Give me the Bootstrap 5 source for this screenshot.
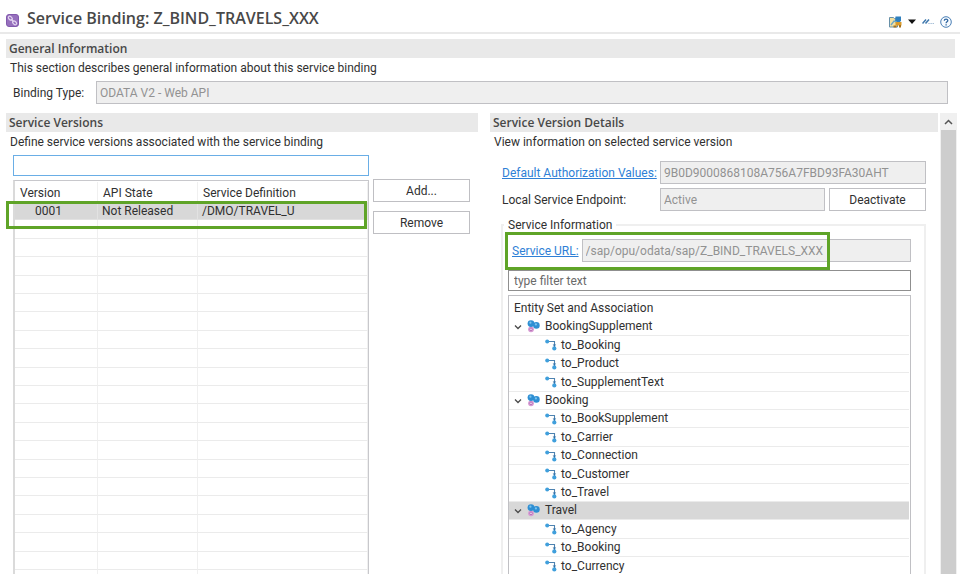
<!DOCTYPE html>
<html lang="en">
<head>
<meta charset="utf-8">
<meta name="viewport" content="width=device-width, initial-scale=1">
<title>Service Binding: Z_BIND_TRAVELS_XXX</title>
<link href="https://cdn.jsdelivr.net/npm/bootstrap@5.3.0/dist/css/bootstrap.min.css" rel="stylesheet">
<style>
  body { font-family: Roboto, "Open Sans", sans-serif; font-size: 12px; line-height: 18px; color: #303030; background: #fff; }
  .editor-head { height: 34px; border-bottom: 2px solid #e9e9e9; padding: 0 8px 0 6px; }
  .editor-title { font-family: "Open Sans", sans-serif; font-size: 16px; line-height: 20px; font-weight: 600; color: #484848; padding-top: 3px; padding-left: 8px; }
  .tools { gap: 6px; padding-top: 11px; }
  .tool { border: 0; padding: 0; background: none; display: flex; }
  .section-title { font-family: "Open Sans", sans-serif; font-size: 12px; line-height: 19px; font-weight: 600; color: #484848; background: #e9e9e9; padding-left: 3px; margin: 0; }
  .section-note { margin: 0; padding: 1px 0 0 4px; }
  .field { height: 23px; font-size: 12px; line-height: 18px; padding: 0 3px; border: 1px solid #c0c0c4; border-radius: 0; color: #303030; background: #fff; min-width: 0; }
  .field:read-only { background: #efefef; color: #929292; }
  .field:focus { box-shadow: none; }
  .push { height: 23px; font-size: 12px; line-height: 18px; padding: 0; border: 1px solid #bfbfc3; border-radius: 0; background: #fff; color: #303030; flex: none; width: 97px; }
  .caption-link { color: #2f7fd6; text-decoration: underline; flex: none; }
  .general { padding: 5px 5px 0 6px; }
  .general-row { padding: 4px 7px 0 7px; }
  .general-row label { width: 83px; flex: none; }
  .workspace { padding: 9px 0 0 6px; }
  .panels { display: grid; grid-template-columns: 472fr 448fr; gap: 12px; margin-right: 2px; }
  .panel { display: flex; flex-direction: column; min-height: 0; }
  .versions-body { padding: 4px 8px 0 7px; gap: 4px; }
  .versions-list { display: flex; flex-direction: column; gap: 4px; }
  .search-box { height: 21px; border-color: #6aaee6; }
  .side-buttons { gap: 9px; padding-top: 24px; }
  .grid-wrap { position: relative; border: 1px solid #c8c8cc; border-left: 2px solid #dadada; border-bottom: 0; padding-top: 1px; }
  .versions { width: 100%; table-layout: fixed; border-collapse: separate; border-spacing: 0; }
  .versions th { font-weight: 400; height: 20px; line-height: 18px; padding: 2px 0 0 5px; border-right: 1px solid #f0f0f0; }
  .versions td { height: 18px; line-height: 16px; padding: 1px 0 0 4px; border-right: 1px solid #f0f0f0; border-bottom: 1px solid #ebebeb; }
  .versions tbody tr:nth-child(5n+2) td, .versions tbody tr:nth-child(5n+4) td { height: 19px; }
  .versions .picked td { background: #d8d8d8; border-color: #e2e2e2; }
  .versions td:first-child { padding-left: 20px; }
  .col-version { width: 83px; }
  .col-state { width: 100px; }
  .highlight { position: absolute; border: 3px solid #5fa428; pointer-events: none; }
  .highlight-row { left: -9px; right: 1px; top: 20px; height: 28px; }
  .highlight-url { left: -3px; right: 81px; top: -7px; bottom: -8px; }
  .details-body { padding: 10px 12px 0 11px; gap: 4px; }
  .details-row { gap: 4px; }
  .details-row > :first-child { width: 155px; flex: none; white-space: nowrap; padding-left: 1px; }
  .info-box { border: 2px solid #efefef; border-bottom: 0; padding: 0 13px 0 5px; margin-top: 1px; display: flex; flex-direction: column; min-width: 0; }
  .info-box legend { float: none; width: auto; font-size: 12px; line-height: 18px; padding: 0 4px; margin: 0 0 0 -4px; }
  .url-row { position: relative; padding-left: 4px; gap: 3px; margin: 5px 0 8px; }
  .filter-box { height: 21px; border-color: #8f8f8f; padding-left: 5px; margin-bottom: 4px; color: #666; }
  .filter-box::placeholder { color: #6a6a6a; opacity: 1; }
  .tree { border: 1px solid #c0c0c4; border-bottom: 0; padding: 3px 1px 0 0; }
  .tree-head { padding-left: 5px; height: 19px; line-height: 18px; }
  .tree ul { list-style: none; margin: 0; padding: 0; }
  .tree-row { display: flex; align-items: center; height: 18px; line-height: 17px; border-bottom: 1px solid #ebebeb; padding-left: 5px; gap: 5px; }
  .tree-row:nth-child(5n+2), .tree-row:nth-child(5n+4) { height: 19px; }
  .tree-leaf { padding-left: 36px; gap: 4px; }
  .tree-row.picked { background: #d8d8d8; }
  .tree-row svg { flex: none; }
  .scroll-rail { width: 17px; flex: none; background: #cdcdcd; border: 1px solid #f0f0f0; border-width: 0 1px; margin-right: 3px; }
  .scroll-up { height: 17px; border: 0; background: #f0f0f0; padding: 0; display: flex; width: 100%; }
</style>
<script src="https://cdn.jsdelivr.net/npm/bootstrap@5.3.0/dist/js/bootstrap.bundle.min.js"></script>
</head>
<body class="vh-100 overflow-hidden d-flex flex-column">
<svg width="0" height="0" class="position-absolute" aria-hidden="true">
  <defs>
    <symbol id="i-entity" viewBox="0 0 13 13">
      <circle cx="4" cy="9.3" r="2.9" fill="#d79bd3"/><circle cx="4" cy="9.3" r="1.3" fill="#f3dcf1" stroke="#a65aa8" stroke-width=".7"/>
      <circle cx="4" cy="3.6" r="3.4" fill="#2e8fd3"/><circle cx="9.4" cy="5.4" r="3.3" fill="#2e8fd3"/>
      <circle cx="3.4" cy="2.7" r="1.1" fill="#7cc4ef"/><circle cx="8.9" cy="4.4" r="1.1" fill="#7cc4ef"/>
    </symbol>
    <symbol id="i-assoc" viewBox="0 0 12 12">
      <path d="M2 2.5H9.5V9" fill="none" stroke="#4d82b0" stroke-width="1.1"/>
      <circle cx="2.2" cy="2.5" r="2" fill="#3f9fdc"/><circle cx="9.3" cy="9.4" r="2.1" fill="#3f9fdc"/>
      <path d="M7.6 5.4h3.6L9.4 7.6z" fill="#2f6ea5"/>
    </symbol>
    <symbol id="i-open" viewBox="0 0 8 8"><path d="M1 2.5l3 3 3-3" fill="none" stroke="#4a4a4a" stroke-width="1.3"/></symbol>
  </defs>
</svg>

<header class="editor-head d-flex align-items-center flex-shrink-0">
  <svg width="13" height="13" viewBox="0 0 13 13" class="mt-2" aria-hidden="true">
    <rect x=".5" y=".5" width="12" height="12" rx="2.5" fill="#9670bd" stroke="#8259ad"/>
    <g fill="none" stroke="#e3d4f0" stroke-width="1.2"><ellipse cx="4.300" cy="4.200" rx="2.300" ry="1.500" transform="rotate(45 4.300 4.200)"/><ellipse cx="8.600" cy="8.800" rx="2.300" ry="1.500" transform="rotate(45 8.600 8.800)"/><path d="M5.200 5.200l2.500 2.500"/></g>
  </svg>
  <h1 class="editor-title mb-0 flex-grow-1">Service Binding: Z_BIND_TRAVELS_XXX</h1>
  <div class="tools d-flex align-items-center">
    <button class="tool" type="button" aria-label="Open editor">
      <svg width="13" height="12" viewBox="0 0 13 12"><path d="M.5 1.500h4l1 1.200h3v8.300h-8z" fill="#f3e0a0" stroke="#6790a8"/><path d="M6.500.5h5.500v4.500L9.500 7 6 5z" fill="#2f7fbd"/><path d="M2 9l3-4 2.500 1" stroke="#6ba7c7" stroke-width="1.400" fill="none"/><rect x="6.500" y="6" width="6" height="3.500" fill="#d99a2b"/><path d="M4.500 9.500h3v2h-3zM10 9h2v2.500h-2z" fill="#a7711a"/></svg>
    </button>
    <button class="tool" type="button" aria-label="Open editor menu"><svg width="8" height="5" viewBox="0 0 8 5"><path d="M0 .5h8L4 5z" fill="#111"/></svg></button>
    <button class="tool" type="button" aria-label="Comment"><svg width="12" height="7" viewBox="0 0 12 7"><path d="M.5 5.500l3.500-4M3.500 5.500l3.500-4" stroke="#3f78ad" stroke-width="1.500"/><path d="M6.500 5.500h1M8.600 5.500h1M10.700 5.500h1" stroke="#7fa3c6"/></svg></button>
    <button class="tool" type="button" aria-label="Help"><svg width="12" height="12" viewBox="0 0 12 12"><circle cx="6" cy="6" r="5.300" fill="#f7fbff" stroke="#4a7fb5"/><path d="M4.300 4.700c0-2.200 3.500-2.200 3.500-.1 0 1.200-1.700 1.300-1.700 2.700M6.100 8.200v1.300" fill="none" stroke="#2f66a0" stroke-width="1.300"/></svg></button>
  </div>
</header>

<section class="general flex-shrink-0">
  <h2 class="section-title">General Information</h2>
  <p class="section-note">This section describes general information about this service binding</p>
  <div class="general-row d-flex align-items-center">
    <label for="binding-type">Binding Type:</label>
    <input id="binding-type" class="field flex-grow-1" type="text" value="ODATA V2 - Web API" readonly>
  </div>
</section>

<main class="workspace d-flex flex-grow-1 overflow-hidden">
  <div class="panels flex-grow-1">
    <section class="panel">
      <h2 class="section-title">Service Versions</h2>
      <p class="section-note">Define service versions associated with the service binding</p>
      <div class="versions-body d-flex">
        <div class="versions-list flex-grow-1">
          <input class="field search-box w-100" type="text" aria-label="Filter service versions">
          <div class="grid-wrap">
            <table class="versions">
              <colgroup><col class="col-version"><col class="col-state"><col></colgroup>
              <thead><tr><th>Version</th><th>API State</th><th>Service Definition</th></tr></thead>
              <tbody>
                <tr class="picked"><td>0001</td><td>Not Released</td><td>/DMO/TRAVEL_U</td></tr>
                <tr><td></td><td></td><td></td></tr><tr><td></td><td></td><td></td></tr>
                <tr><td></td><td></td><td></td></tr><tr><td></td><td></td><td></td></tr>
                <tr><td></td><td></td><td></td></tr><tr><td></td><td></td><td></td></tr>
                <tr><td></td><td></td><td></td></tr><tr><td></td><td></td><td></td></tr>
                <tr><td></td><td></td><td></td></tr><tr><td></td><td></td><td></td></tr>
                <tr><td></td><td></td><td></td></tr><tr><td></td><td></td><td></td></tr>
                <tr><td></td><td></td><td></td></tr><tr><td></td><td></td><td></td></tr>
                <tr><td></td><td></td><td></td></tr><tr><td></td><td></td><td></td></tr>
                <tr><td></td><td></td><td></td></tr><tr><td></td><td></td><td></td></tr>
                <tr><td></td><td></td><td></td></tr><tr><td></td><td></td><td></td></tr>
              </tbody>
            </table>
            <div class="highlight highlight-row"></div>
          </div>
        </div>
        <div class="side-buttons d-flex flex-column">
          <button class="push" type="button">Add...</button>
          <button class="push" type="button">Remove</button>
        </div>
      </div>
    </section>

    <section class="panel">
      <h2 class="section-title">Service Version Details</h2>
      <p class="section-note">View information on selected service version</p>
      <div class="details-body d-flex flex-column">
        <div class="details-row d-flex align-items-center">
          <a href="#auth-values" class="caption-link">Default Authorization Values:</a>
          <input id="auth-values" class="field flex-grow-1" type="text" aria-label="Default Authorization Values" value="9B0D9000868108A756A7FBD93FA30AHT" readonly>
        </div>
        <div class="details-row d-flex align-items-center">
          <label for="endpoint">Local Service Endpoint:</label>
          <input id="endpoint" class="field flex-grow-1" type="text" value="Active" readonly>
          <button class="push" type="button">Deactivate</button>
        </div>
        <fieldset class="info-box">
          <legend>Service Information</legend>
          <div class="url-row d-flex align-items-center">
            <a href="#service-url" class="caption-link">Service URL:</a>
            <input id="service-url" class="field flex-grow-1" type="text" aria-label="Service URL" value="/sap/opu/odata/sap/Z_BIND_TRAVELS_XXX" readonly>
            <div class="highlight highlight-url"></div>
          </div>
          <input class="field filter-box w-100" type="text" placeholder="type filter text" aria-label="Filter entities">
          <div class="tree">
            <div class="tree-head">Entity Set and Association</div>
            <ul>
              <li class="tree-row"><svg width="8" height="8"><use href="#i-open"/></svg><svg width="13" height="13"><use href="#i-entity"/></svg>BookingSupplement</li>
              <li class="tree-row tree-leaf"><svg width="12" height="12"><use href="#i-assoc"/></svg>to_Booking</li>
              <li class="tree-row tree-leaf"><svg width="12" height="12"><use href="#i-assoc"/></svg>to_Product</li>
              <li class="tree-row tree-leaf"><svg width="12" height="12"><use href="#i-assoc"/></svg>to_SupplementText</li>
              <li class="tree-row"><svg width="8" height="8"><use href="#i-open"/></svg><svg width="13" height="13"><use href="#i-entity"/></svg>Booking</li>
              <li class="tree-row tree-leaf"><svg width="12" height="12"><use href="#i-assoc"/></svg>to_BookSupplement</li>
              <li class="tree-row tree-leaf"><svg width="12" height="12"><use href="#i-assoc"/></svg>to_Carrier</li>
              <li class="tree-row tree-leaf"><svg width="12" height="12"><use href="#i-assoc"/></svg>to_Connection</li>
              <li class="tree-row tree-leaf"><svg width="12" height="12"><use href="#i-assoc"/></svg>to_Customer</li>
              <li class="tree-row tree-leaf"><svg width="12" height="12"><use href="#i-assoc"/></svg>to_Travel</li>
              <li class="tree-row picked"><svg width="8" height="8"><use href="#i-open"/></svg><svg width="13" height="13"><use href="#i-entity"/></svg>Travel</li>
              <li class="tree-row tree-leaf"><svg width="12" height="12"><use href="#i-assoc"/></svg>to_Agency</li>
              <li class="tree-row tree-leaf"><svg width="12" height="12"><use href="#i-assoc"/></svg>to_Booking</li>
              <li class="tree-row tree-leaf"><svg width="12" height="12"><use href="#i-assoc"/></svg>to_Currency</li>
            </ul>
          </div>
        </fieldset>
      </div>
    </section>
  </div>
  <div class="scroll-rail">
    <button class="scroll-up align-items-center justify-content-center" type="button" aria-label="Scroll up"><svg width="9" height="6" viewBox="0 0 9 6"><path d="M1 5l3.500-3.500L8 5" fill="none" stroke="#555" stroke-width="1.500"/></svg></button>
  </div>
</main>
</body>
</html>
